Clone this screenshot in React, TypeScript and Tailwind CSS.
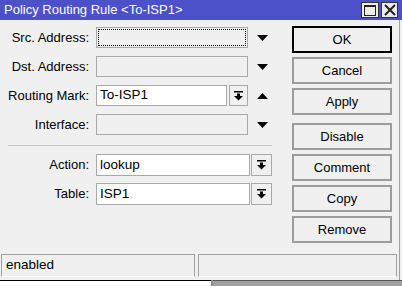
import React from "react";

const font = { fontFamily: '"Liberation Sans", Arial, sans-serif' };

const DownTri = () => (
  <svg width="11" height="6" viewBox="0 0 11 6">
    <polygon points="0,0 11,0 5.5,6" fill="#000" />
  </svg>
);

const UpTri = () => (
  <svg width="11" height="6" viewBox="0 0 11 6">
    <polygon points="0,6 11,6 5.5,0" fill="#000" />
  </svg>
);

const DropIcon = () => (
  <svg width="9" height="10" viewBox="0 0 9 10">
    <rect x="0" y="0" width="9" height="1.5" fill="#000" />
    <rect x="3" y="2.5" width="3" height="3" fill="#000" />
    <polygon points="0,5 9,5 4.5,9.5" fill="#000" />
  </svg>
);

const Row = ({ label, children, h = "h-[21px]" }: { label: string; children: React.ReactNode; h?: string }) => (
  <div className={`flex items-center ${h}`}>
    <div className="w-[89px] text-right text-[13px] text-black">{label}</div>
    <div className="ml-[7px] flex h-full items-center">{children}</div>
  </div>
);

const EmptyBox = ({ focus }: { focus?: boolean }) => (
  <div className="h-full w-[152px] border border-[#a9a9a9] bg-[#f0f0f0] p-[1px]">
    {focus && <div className="h-full w-full border border-dotted border-black" />}
  </div>
);

const ArrowSlot = ({ up }: { up?: boolean }) => (
  <div className="ml-[9px] flex w-[11px] items-center justify-center">{up ? <UpTri /> : <DownTri />}</div>
);

const Combo = ({ value, w, bw, gap }: { value: string; w: string; bw: string; gap: string }) => (
  <>
    <div className={`flex h-full items-center border border-[#a9a9a9] bg-white pl-[3px] text-[13.5px] text-black ${w}`}>
      {value}
    </div>
    <div className={`flex h-full items-center justify-center border border-[#a9a9a9] bg-[#f0f0f0] ${bw} ${gap}`}>
      <DropIcon />
    </div>
  </>
);

const Btn = ({ text, main }: { text: string; main?: boolean }) => (
  <div
    className={`flex h-[27px] w-[100px] items-center justify-center border-2 bg-[#f0f0f0] text-[13px] text-black ${
      main ? "border-black" : "border-[#9c9c9c]"
    }`}
  >
    {text}
  </div>
);

export default function App() {
  return (
    <div className="h-[286px] w-[402px] overflow-hidden bg-[#f0f0f0]" style={font}>
      <div className="flex h-[20px] items-center justify-between bg-[#4c51c9] pl-[4px] pr-[4px]">
        <span className="text-[13px] text-white">Policy Routing Rule &lt;To-ISP1&gt;</span>
        <div className="flex gap-[2px]">
          <div className="flex h-[16px] w-[18px] items-center justify-center border border-[#333] bg-[#ececec]">
            <div className="h-[11px] w-[12px] border border-t-2 border-[#222]" />
          </div>
          <div className="flex h-[16px] w-[17px] items-center justify-center border border-[#333] bg-[#ececec]">
            <svg width="12" height="12" viewBox="0 0 12 12">
              <path d="M1 1 L11 11 M11 1 L1 11" stroke="#222" strokeWidth="2" />
            </svg>
          </div>
        </div>
      </div>

      <div className="h-[260px] w-[400px] border-r border-[#a0a0a0]">
        <div className="flex h-[234px]">
          <div className="w-[292px] pt-[7px]">
            <div className="flex flex-col gap-[8px]">
              <Row label="Src. Address:">
                <EmptyBox focus />
                <ArrowSlot />
              </Row>
              <Row label="Dst. Address:">
                <EmptyBox />
                <ArrowSlot />
              </Row>
              <Row label="Routing Mark:">
                <Combo value="To-ISP1" w="w-[131px]" bw="w-[19px]" gap="ml-[2px]" />
                <ArrowSlot up />
              </Row>
              <Row label="Interface:">
                <EmptyBox />
                <ArrowSlot />
              </Row>
            </div>
            <div className="ml-[8px] mt-[10px] h-px w-[264px] bg-[#c4c4c4]" />
            <div className="mt-[8px] flex flex-col gap-[7px]">
              <Row label="Action:" h="h-[22px]">
                <Combo value="lookup" w="w-[154px]" bw="w-[21px]" gap="ml-[1px]" />
              </Row>
              <Row label="Table:" h="h-[22px]">
                <Combo value="ISP1" w="w-[154px]" bw="w-[21px]" gap="ml-[1px]" />
              </Row>
            </div>
          </div>
          <div className="flex flex-col gap-[4px] pt-[6px]">
            <Btn text="OK" main />
            <Btn text="Cancel" />
            <Btn text="Apply" />
            <div className="mt-[4px] flex flex-col gap-[4px]">
              <Btn text="Disable" />
              <Btn text="Comment" />
              <Btn text="Copy" />
              <Btn text="Remove" />
            </div>
          </div>
        </div>
        <div className="flex h-[23px] gap-[3px] pl-[1px]">
          <div className="flex w-[194px] items-center border border-[#a0a0a0] border-b-white border-r-[#a0a0a0] pl-[4px] text-[13.5px] text-black">
            enabled
          </div>
          <div className="w-[199px] border border-[#a0a0a0] border-b-white" />
        </div>
      </div>

      <div className="flex h-[6px]">
        <div className="w-[211px] border-t border-black bg-white" />
        <div className="w-[2px] bg-[#888]" />
        <div className="flex-1 border-t border-[#555] bg-[#a0a0a0]" />
      </div>
    </div>
  );
}
